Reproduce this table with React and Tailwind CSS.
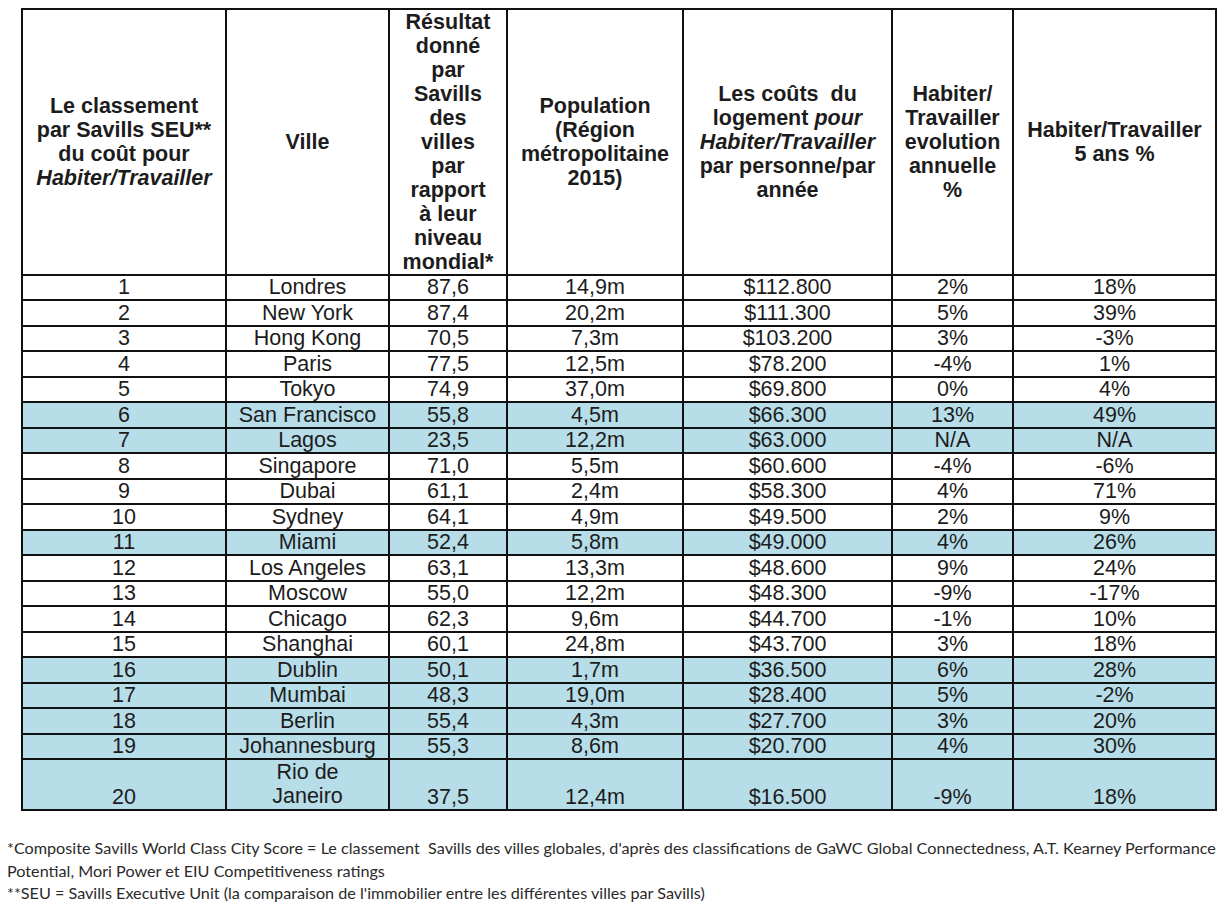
const rows = [
  ['1', 'Londres', '87,6', '14,9m', '$112.800', '2%', '18%'],
  ['2', 'New York', '87,4', '20,2m', '$111.300', '5%', '39%'],
  ['3', 'Hong Kong', '70,5', '7,3m', '$103.200', '3%', '-3%'],
  ['4', 'Paris', '77,5', '12,5m', '$78.200', '-4%', '1%'],
  ['5', 'Tokyo', '74,9', '37,0m', '$69.800', '0%', '4%'],
  ['6', 'San Francisco', '55,8', '4,5m', '$66.300', '13%', '49%', true],
  ['7', 'Lagos', '23,5', '12,2m', '$63.000', 'N/A', 'N/A', true],
  ['8', 'Singapore', '71,0', '5,5m', '$60.600', '-4%', '-6%'],
  ['9', 'Dubai', '61,1', '2,4m', '$58.300', '4%', '71%'],
  ['10', 'Sydney', '64,1', '4,9m', '$49.500', '2%', '9%'],
  ['11', 'Miami', '52,4', '5,8m', '$49.000', '4%', '26%', true],
  ['12', 'Los Angeles', '63,1', '13,3m', '$48.600', '9%', '24%'],
  ['13', 'Moscow', '55,0', '12,2m', '$48.300', '-9%', '-17%'],
  ['14', 'Chicago', '62,3', '9,6m', '$44.700', '-1%', '10%'],
  ['15', 'Shanghai', '60,1', '24,8m', '$43.700', '3%', '18%'],
  ['16', 'Dublin', '50,1', '1,7m', '$36.500', '6%', '28%', true],
  ['17', 'Mumbai', '48,3', '19,0m', '$28.400', '5%', '-2%', true],
  ['18', 'Berlin', '55,4', '4,3m', '$27.700', '3%', '20%', true],
  ['19', 'Johannesburg', '55,3', '8,6m', '$20.700', '4%', '30%', true],
]

const th = 'border-r-2 border-b-2 border-[#111] font-bold text-center align-middle px-0 leading-[24px]'
const cell = 'border-r-2 border-b-2 border-[#111] text-center p-0 leading-[21px] whitespace-nowrap'
const td = `${cell} align-middle`
const tdLast = `${cell} align-bottom pb-[1px]`

export default function App() {
  return (
    <div className="w-[1230px] h-[911px] bg-white text-[#1c1c1c] font-[family-name:'Liberation_Sans',Arial,sans-serif] overflow-hidden">
      <table className="ml-[21px] mt-[8px] border-separate border-spacing-0 table-fixed border-l-2 border-t-2 border-[#111] text-[21.5px]">
        <thead>
          <tr className="h-[266px]">
            <th className={`${th} w-[204px]`}>
              Le classement<br />par Savills SEU**<br />du coût pour<br /><i>Habiter/Travailler</i>
            </th>
            <th className={`${th} w-[163px]`}>Ville</th>
            <th className={`${th} w-[118px]`}>
              Résultat<br />donné<br />par<br />Savills<br />des<br />villes<br />par<br />rapport<br />à leur<br />niveau<br />mondial*
            </th>
            <th className={`${th} w-[176px]`}>
              Population<br />(Région<br />métropolitaine<br />2015)
            </th>
            <th className={`${th} w-[209px]`}>
              Les coûts&nbsp; du<br />logement <i>pour</i><br /><i>Habiter/Travailler</i><br />par personne/par<br />année
            </th>
            <th className={`${th} w-[121px]`}>
              Habiter/<br />Travailler<br />evolution<br />annuelle<br />%
            </th>
            <th className={`${th} w-[203px]`}>
              Habiter/Travailler<br />5 ans %
            </th>
          </tr>
        </thead>
        <tbody>
          {rows.map((r, idx) => (
            <tr
              key={r[0]}
              className={`${idx % 2 === 1 ? 'h-[26px]' : 'h-[25px]'} ${r[7] ? 'bg-[#b7dde8]' : ''}`}
            >
              {r.slice(0, 7).map((c, i) => (
                <td key={i} className={td}>{c}</td>
              ))}
            </tr>
          ))}
          <tr className="h-[50px] bg-[#b7dde8]">
            <td className={tdLast}>20</td>
            <td className={`${tdLast} leading-[24px]`}>Rio de<br />Janeiro</td>
            <td className={tdLast}>37,5</td>
            <td className={tdLast}>12,4m</td>
            <td className={tdLast}>$16.500</td>
            <td className={tdLast}>-9%</td>
            <td className={tdLast}>18%</td>
          </tr>
        </tbody>
      </table>

      <div className="mt-[26px] ml-[7px] text-[16.2px] leading-[22.5px] text-[#2a2a2a] font-[family-name:'Lato','Open_Sans',sans-serif] whitespace-nowrap">
        <p>*Composite Savills World Class City Score = Le classement&nbsp; Savills des villes globales, d'après des classifications de GaWC Global Connectedness, A.T. Kearney Performance</p>
        <p>Potential, Mori Power et EIU Competitiveness ratings</p>
        <p>**SEU = Savills Executive Unit (la comparaison de l'immobilier entre les différentes villes par Savills)</p>
      </div>
    </div>
  )
}
